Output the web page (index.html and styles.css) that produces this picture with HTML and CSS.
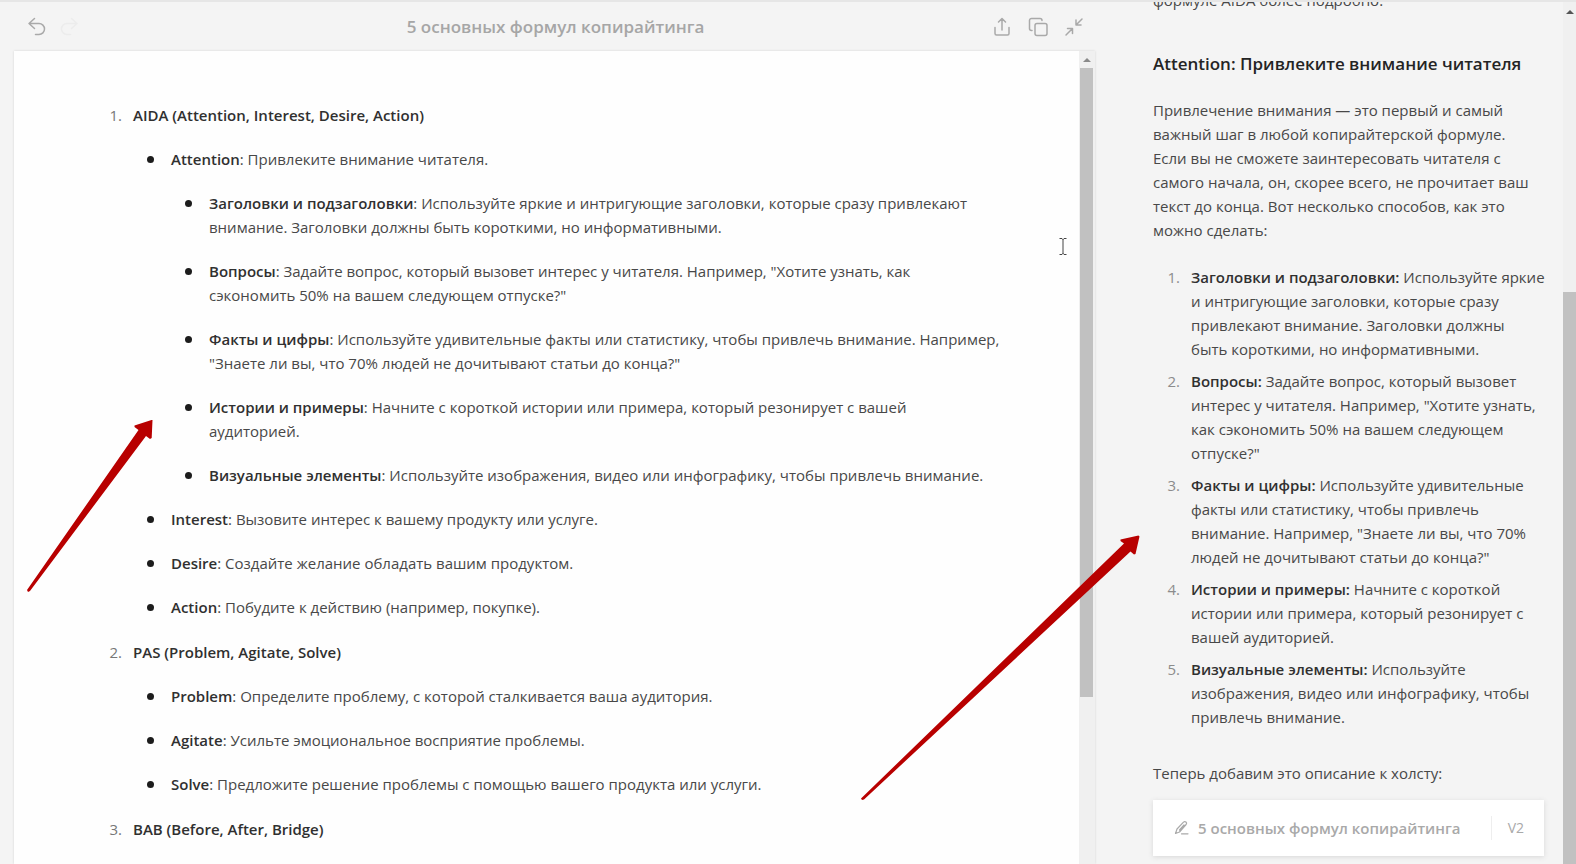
FILE: index.html
```html
<!DOCTYPE html>
<html lang="ru">
<head>
<meta charset="utf-8">
<title>5 основных формул копирайтинга</title>
<link rel="stylesheet" href="styles.css">
</head>
<body>
<div class="app">
  <main class="canvas">
    <header class="toolbar">
      <div class="tools tools-left">
        <button class="tool" type="button" aria-label="Отменить">
          <svg width="20" height="20" viewBox="0 0 20 20"><path d="M7.500 1.500 2 6.500l5.500 5M2.500 6.500h9.500a5.200 5.200 0 0 1 0 11h-3.500"/></svg>
        </button>
        <button class="tool tool-off" type="button" aria-label="Повторить" disabled>
          <svg width="20" height="20" viewBox="0 0 20 20"><path d="m12.500 1.500 5.500 5-5.500 5M17.500 6.500H8a5.200 5.200 0 0 0 0 11h3.500"/></svg>
        </button>
      </div>
      <h1 class="title">5 основных формул копирайтинга</h1>
      <div class="tools tools-right">
        <button class="tool" type="button" aria-label="Поделиться">
          <svg width="20" height="20" viewBox="0 0 20 20"><path d="M3 10.500v6a1.500 1.500 0 0 0 1.500 1.500h11a1.500 1.500 0 0 0 1.500-1.500v-6M10 13V1.500M6.500 5 10 1.500 13.500 5"/></svg>
        </button>
        <button class="tool" type="button" aria-label="Копировать">
          <svg width="20" height="20" viewBox="0 0 20 20"><rect x="7" y="6.500" width="12" height="12" rx="2"/><path d="M4 13.500H3.500A2 2 0 0 1 1.500 11.500V3.500a2 2 0 0 1 2-2h8.500a2 2 0 0 1 2 2"/></svg>
        </button>
        <button class="tool" type="button" aria-label="Свернуть">
          <svg width="20" height="20" viewBox="0 0 20 20"><path d="M18 2l-6 6M12 3v5h5M2 18l6.500-6.500M3.500 11.500h5v5"/></svg>
        </button>
      </div>
    </header>
    <div class="sheet">
      <article class="doc">
        <ol class="formulas">
          <li><strong>AIDA (Attention, Interest, Desire, Action)</strong>
            <ul>
              <li><strong>Attention</strong>: Привлеките внимание читателя.
                <ul>
                  <li><strong>Заголовки и подзаголовки</strong>: Используйте яркие и интригующие заголовки, которые сразу привлекают<br>внимание. Заголовки должны быть короткими, но информативными.</li>
                  <li><strong>Вопросы</strong>: Задайте вопрос, который вызовет интерес у читателя. Например, "Хотите узнать, как<br>сэкономить 50% на вашем следующем отпуске?"</li>
                  <li><strong>Факты и цифры</strong>: Используйте удивительные факты или статистику, чтобы привлечь внимание. Например,<br>"Знаете ли вы, что 70% людей не дочитывают статьи до конца?"</li>
                  <li><strong>Истории и примеры</strong>: Начните с короткой истории или примера, который резонирует с вашей<br>аудиторией.</li>
                  <li><strong>Визуальные элементы</strong>: Используйте изображения, видео или инфографику, чтобы привлечь внимание.</li>
                </ul>
              </li>
              <li><strong>Interest</strong>: Вызовите интерес к вашему продукту или услуге.</li>
              <li><strong>Desire</strong>: Создайте желание обладать вашим продуктом.</li>
              <li><strong>Action</strong>: Побудите к действию (например, покупке).</li>
            </ul>
          </li>
          <li><strong>PAS (Problem, Agitate, Solve)</strong>
            <ul>
              <li><strong>Problem</strong>: Определите проблему, с которой сталкивается ваша аудитория.</li>
              <li><strong>Agitate</strong>: Усильте эмоциональное восприятие проблемы.</li>
              <li><strong>Solve</strong>: Предложите решение проблемы с помощью вашего продукта или услуги.</li>
            </ul>
          </li>
          <li><strong>BAB (Before, After, Bridge)</strong></li>
        </ol>
      </article>
      <div class="scrollbar sheet-scroll"><span class="arrow-up"></span><span class="thumb"></span></div>
    </div>
  </main>
  <aside class="chat">
    <div class="messages">
      <p class="lead">формуле AIDA более подробно.</p>
      <h2>Attention: Привлеките внимание читателя</h2>
      <p>Привлечение внимания — это первый и самый<br>важный шаг в любой копирайтерской формуле.<br>Если вы не сможете заинтересовать читателя с<br>самого начала, он, скорее всего, не прочитает ваш<br>текст до конца. Вот несколько способов, как это<br>можно сделать:</p>
      <ol class="tips">
        <li><strong>Заголовки и подзаголовки:</strong> Используйте яркие<br>и интригующие заголовки, которые сразу<br>привлекают внимание. Заголовки должны<br>быть короткими, но информативными.</li>
        <li><strong>Вопросы:</strong> Задайте вопрос, который вызовет<br>интерес у читателя. Например, "Хотите узнать,<br>как сэкономить 50% на вашем следующем<br>отпуске?"</li>
        <li><strong>Факты и цифры:</strong> Используйте удивительные<br>факты или статистику, чтобы привлечь<br>внимание. Например, "Знаете ли вы, что 70%<br>людей не дочитывают статьи до конца?"</li>
        <li><strong>Истории и примеры:</strong> Начните с короткой<br>истории или примера, который резонирует с<br>вашей аудиторией.</li>
        <li><strong>Визуальные элементы:</strong> Используйте<br>изображения, видео или инфографику, чтобы<br>привлечь внимание.</li>
      </ol>
      <p>Теперь добавим это описание к холсту:</p>
      <button class="card" type="button">
        <svg class="pen" width="16" height="16" viewBox="0 0 16 16"><path d="M1.500 13.500 3 9 9.500 2.200a1.700 1.700 0 0 1 2.600 2.300L5.500 12zM7.500 13.800h6.500M5.500 10l4.500-5"/></svg>
        <span class="card-name">5 основных формул копирайтинга</span>
        <span class="card-version">V2</span>
      </button>
    </div>
    <div class="scrollbar chat-scroll"><span class="arrow-up"></span><span class="thumb"></span></div>
  </aside>
</div>
<svg class="marks" width="1160" height="820" viewBox="0 0 1160 820" aria-hidden="true">
  <path class="mark" d="M27 590 138.500 430 134.500 427V425.500L151.500 420H152.500L151.700 438 150 439 146 436 30 591 28 592z"/>
  <path class="mark" d="M861 798.500 1124 543.500 1120.500 541V539.500L1138.500 535.500 1139.500 536.500 1135.500 554 1134 554.500 1130.500 551.500 864 799.500 862 800z"/>
  <path class="caret" d="M1059.500 238.500h2.500l1 1 1-1h2.500M1063 239v15M1059.500 254.500h2.500l1-1 1 1h2.500"/>
</svg>
</body>
</html>
```
FILE: styles.css
```css
* { box-sizing: border-box; }

body {
  margin: 0;
  background: #f4f4f4;
  color: #484848;
  font-family: "Open Sans", "Noto Sans", sans-serif;
  font-size: 15px;
  line-height: 24px;
}

button {
  border: 0;
  padding: 0;
  background: none;
  color: inherit;
  font: inherit;
}

ol, ul { margin: 0; padding: 0; list-style: none; }
strong { font-weight: 600; color: #303030; }

.app {
  display: flex;
  height: 100vh;
  overflow: hidden;
  border-top: 2px solid #e6e6e6;
}

.canvas {
  flex: 1;
  min-width: 0;
  display: flex;
  flex-direction: column;
  padding-left: 14px;
}

.toolbar {
  display: grid;
  grid-template-columns: 1fr auto 1fr;
  align-items: center;
  height: 49px;
  padding: 0 11px 0 13px;
}

.tools { display: flex; }
.tools-left { gap: 12px; }
.tools-right { gap: 16px; justify-content: flex-end; }

.tool { display: flex; color: #a9a9a9; }
.tool-off { color: #ececec; }
.tool svg, .pen {
  fill: none;
  stroke: currentColor;
  stroke-width: 1.5;
  stroke-linecap: round;
  stroke-linejoin: round;
}
.pen { stroke-width: 1.2; }

.title {
  margin: 0;
  font-size: 17px;
  font-weight: 600;
  color: #a6a6a6;
}

.sheet {
  flex: 1;
  min-height: 0;
  display: flex;
  background: #fefefe;
  box-shadow: 0 0 2px #d4d4d4;
}

.doc {
  flex: 1;
  min-width: 0;
  overflow: hidden;
  padding: 52px 0 0 119px;
  white-space: nowrap;
}

.formulas { display: grid; gap: 21px; }
.formulas ul { display: grid; gap: 20px; margin-top: 20px; padding-left: 38px; }

/* Markers hang in the indent to the left of each item */
.formulas, .tips { counter-reset: item; }
.formulas li, .tips li { position: relative; }
.formulas > li, .tips > li { counter-increment: item; }
.formulas > li::before, .tips > li::before {
  content: counter(item) ".";
  position: absolute;
  right: 100%;
  margin-right: 11px;
  color: #777;
}
.tips > li::before { color: #8c8c8c; }
.formulas ul > li::before {
  content: "";
  position: absolute;
  left: -24px;
  top: 9px;
  width: 7px;
  height: 7px;
  border-radius: 50%;
  background: #1c1c1c;
}

.scrollbar {
  display: flex;
  flex-direction: column;
  align-items: center;
  background: #f0f0f0;
}
.arrow-up {
  border: 4px solid transparent;
  border-top: 0;
  border-bottom: 4px solid #8a8a8a;
}
.thumb { align-self: stretch; background: #c1c1c1; }

.sheet-scroll { width: 16px; padding: 7px 2px 0 1px; gap: 6px; }
.sheet-scroll .thumb { height: 78%; }

.chat {
  flex: 0 0 481px;
  display: flex;
  justify-content: space-between;
  padding-left: 58px;
}

.messages { width: 391px; white-space: nowrap; }
.messages p { margin: 0; }
.messages .lead { margin-top: -14px; }
.messages h2 {
  margin: 40px 0 22px;
  font-size: 17px;
  line-height: 24px;
  font-weight: 600;
  color: #242424;
}

.tips { display: grid; gap: 8px; margin: 23px 0 32px; padding-left: 38px; }

.card {
  display: flex;
  align-items: center;
  width: 100%;
  height: 56px;
  margin-top: 15px;
  padding: 0 20px 0 21px;
  background: #fff;
  box-shadow: 0 1px 5px #d8d8d8;
  color: #a9a9a9;
  text-align: left;
}
.card-name { flex: 1; margin-left: 8px; font-weight: 600; }
.card-version {
  padding-left: 16px;
  border-left: 1px solid #eee;
  font-size: 14px;
}

.chat-scroll { width: 13px; padding-top: 8px; }
.chat-scroll .arrow-up { border-bottom-color: #555; }
.chat-scroll .thumb { flex: 1; margin-top: 278px; }

.marks {
  position: absolute;
  top: 0;
  left: 0;
  pointer-events: none;
}
.mark { fill: #b80000; }
.caret { fill: none; stroke: #444; stroke-width: 1; }
```
